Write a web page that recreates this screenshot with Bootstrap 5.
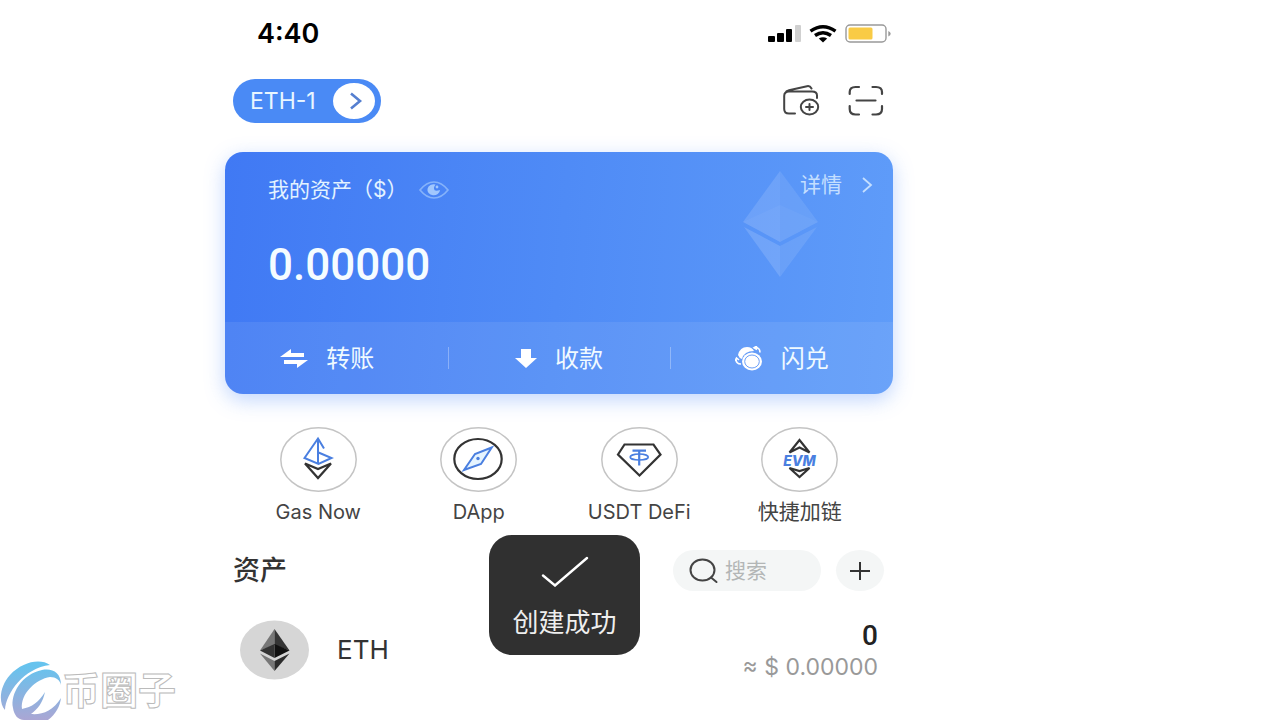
<!DOCTYPE html>
<html lang="zh-CN">
<head>
<meta charset="utf-8">
<meta name="viewport" content="width=device-width, initial-scale=1">
<title>钱包</title>
<link rel="stylesheet" href="https://cdn.jsdelivr.net/npm/bootstrap@5.3.0/dist/css/bootstrap.min.css">
<style>
  body { font-family: Inter, "Noto Sans CJK SC", sans-serif; color: #333; background: #fff; }
  svg { display: block; flex-shrink: 0; }
  .wallet { width: 100%; max-width: 668px; margin-left: 225px; }
  .status { padding: 20px 2px 0 32px; }
  .clock { font-size: 27px; line-height: 28px; font-weight: 600; color: #000; }
  .topbar { padding: 31px 8px 29px; }
  .account { height: 44px; min-width: 148px; padding: 0 6px 0 17px; font-size: 23px; line-height: 28px; color: #e9f6ff; background: #4a8af5; }
  .assets-card { border-radius: 18px; color: #e3f3ff; background: linear-gradient(95deg, #4079f4, #4f8bf6 50%, #5f9cf9); box-shadow: 0 6px 20px rgba(84, 140, 250, .36); }
  .assets-main { height: 170px; padding: 25px 19px 0 43px; }
  .caption-text { gap: 12px; font-size: 21px; line-height: 26px; }
  .total { margin-top: 34px; font: 500 44px/56px Roboto, sans-serif; color: #f5fcff; }
  .details { height: 16px; gap: 18px; color: #c4dfff; font-size: 21px; line-height: 16px; }
  .eth-mark { top: 19px; right: 75px; }
  .actions { background: rgba(255, 255, 255, .08); border-radius: 0 0 18px 18px; }
  .action { height: 72px; gap: 18px; padding-top: 8px; font-size: 24px; line-height: 32px; color: #f0faff; }
  .action:first-child { padding-right: 30px; }
  .action + .action::before { content: ""; position: absolute; left: 0; top: 25px; height: 22px; border-left: 1px solid rgba(255, 255, 255, .3); }
  .shortcuts { padding: 33px 13px 26px; }
  .shortcut { gap: 8px; color: #444; line-height: 24px; white-space: nowrap; }
  .latin { font-size: 20px; }
  .cjk { font-size: 21px; }
  .section { padding: 0 9px 27px 8px; }
  .section-title { font-size: 27px; line-height: 36px; font-weight: 500; }
  .searchbox { width: 148px; height: 41px; padding: 0 16px; gap: 7px; background: #f4f6f6; }
  .searchbox input { font-size: 21px; line-height: 28px; color: #333; outline: 0; }
  .searchbox input::placeholder { color: #b3b6b6; opacity: 1; }
  .add { width: 48px; height: 41px; margin-left: 15px; background: #f4f6f6; border-radius: 50%; }
  .token { padding: 0 15px; }
  .token-name { font-size: 26px; line-height: 32px; margin-left: 28px; }
  .amount { padding-top: 2px; font: 500 28px/32px Roboto, sans-serif; color: #222; }
  .fiat { font-size: 23px; line-height: 30px; color: #999; }
  .notice { left: 264px; top: 535px; width: 151px; padding: 21px 0 15px; gap: 19px; border-radius: 23px; background: #303030; color: #eee; font-size: 26px; line-height: 34px; }
  .brand { left: 0; bottom: 0; }
  .brand-name { font-size: 38px; line-height: 60px; font-weight: 700; color: #fff; -webkit-text-stroke: 1px #bbb; }
</style>
</head>
<body class="position-relative min-vh-100">
<main class="wallet position-relative">
  <div class="status d-flex justify-content-between align-items-center">
    <span class="clock">4:40</span>
    <div class="d-flex align-items-center">
      <svg class="me-2" width="33" height="18" viewBox="0 0 33 18" aria-hidden="true"><rect y="11" width="7" height="6" rx="1"/><rect x="9" y="8" width="7" height="9" rx="1"/><rect x="18" y="4" width="6" height="13" rx="1"/><rect x="27" width="6" height="17" rx="1" fill="#d0d0d0"/></svg>
      <svg class="me-2" width="28" height="18" viewBox="0 0 28 18" fill="none" stroke="#000" stroke-width="3.4" aria-hidden="true"><path d="M1.5 6.2Q14-2.6 26.500 6.200M6 10.500Q14 4.800 22 10.500"/><path d="M9.800 13.600Q14 11 18.200 13.600L14 17.500z" fill="#000" stroke="none"/></svg>
      <svg width="46" height="20" viewBox="0 0 46 20" aria-hidden="true"><rect x="1" y="1" width="40" height="17" rx="4" fill="#fff" stroke="#999" stroke-width="1.400"/><rect x="3.500" y="3.500" width="24" height="12" rx="1.500" fill="#f9cb45"/><path d="M43.300 7v5.500q2.400-1 2.400-2.700t-2.400-2.800" fill="#999"/></svg>
    </div>
  </div>

  <div class="topbar d-flex justify-content-between align-items-center">
    <button type="button" class="account btn border-0 rounded-pill d-flex justify-content-between align-items-center">ETH-1
      <svg width="42" height="36" viewBox="0 0 42 36" aria-hidden="true"><ellipse cx="21" cy="18" rx="21" ry="18" fill="#fff"/><path d="M18 10.500l9 7.500-9 7.500" fill="none" stroke="#557fd0" stroke-width="2.600"/></svg>
    </button>
    <div class="d-flex">
      <button type="button" class="btn border-0 p-0" aria-label="添加钱包"><svg width="37" height="32" viewBox="0 0 37 32" fill="none" stroke="#444" stroke-width="2" stroke-linecap="round"><path d="M12 28.500H6Q1.200 28.500 1.200 24V11Q1.200 6.500 6 6.500H29Q34 6.500 34 10.500V13M2 8.500Q3 6 6 5.300L24 1.200Q27 .500 28.500 3.500"/><ellipse cx="26.500" cy="22" rx="8.700" ry="7.500"/><path d="M23 22h7M26.500 19v6"/></svg></button>
      <button type="button" class="btn border-0 p-0 ms-4" aria-label="扫一扫"><svg width="41" height="32" viewBox="-3 0 38 32" fill="none" stroke="#444" stroke-width="2.200" stroke-linecap="round"><path d="M1.200 9V7Q1.200 2 7 2h3.500M24 2h3.500q6 0 6 5v2M33.500 21v3q0 5.500-6 5.500H24M10.500 29.500H7q-5.800 0-5.800-5.500v-3M8 15.500h19"/></svg></button>
    </div>
  </div>

  <section class="assets-card position-relative">
    <svg class="eth-mark position-absolute" width="75" height="106" viewBox="0 0 75 106" fill="#fff" aria-hidden="true"><path d="M37 0L0 51 37 71z" opacity=".13"/><path d="M37 0L75 51 37 71z" opacity=".09"/><path d="M37 34L0 51 37 71 75 51z" opacity=".04"/><path d="M1 56L37 75V106z" opacity=".15"/><path d="M74 56L37 75V106z" opacity=".1"/></svg>
    <div class="assets-main position-relative">
      <div class="d-flex justify-content-between align-items-start">
        <div class="d-flex align-items-center caption-text">
          <span>我的资产（$）</span>
          <button type="button" class="btn border-0 p-0" aria-label="隐藏资产"><svg width="30" height="18" viewBox="0 0 30 18"><path d="M1 9Q7.500 1 15 1t14 8q-6.500 8-14 8T1 9z" fill="none" stroke="#85b2fa" stroke-width="1.700"/><path d="M16.500 3.500A6.300 5.500 0 1 0 21 9Q15 11 15 7.500q0-2 1.500-4z" fill="#a1c7fd"/><circle cx="18" cy="6" r="1.400" fill="#a1c7fd"/></svg></button>
        </div>
        <a href="#" class="details d-flex align-items-center text-decoration-none">详情<svg width="14" height="16" viewBox="0 0 14 16" fill="none" stroke="#c4dfff" stroke-width="1.800"><path d="M3 1l8 7-8 7"/></svg></a>
      </div>
      <div class="total">0.00000</div>
    </div>
    <div class="actions row g-0">
      <button type="button" class="action btn border-0 col-4 position-relative d-flex justify-content-center align-items-center"><svg width="28" height="20" viewBox="0 0 28 20" fill="#fff"><path d="M0 8L11 0V4H24V8zM4 11H28L17 19V15H4z"/></svg>转账</button>
      <button type="button" class="action btn border-0 col-4 position-relative d-flex justify-content-center align-items-center"><svg width="22" height="20" viewBox="0 0 22 20" fill="#fff"><path d="M6 0H16V9H22L11 19 0 9H6z"/></svg>收款</button>
      <button type="button" class="action btn border-0 col-4 position-relative d-flex justify-content-center align-items-center"><svg width="28" height="26" viewBox="0 0 28 26"><path d="M3 9Q5 1 12 1q5 0 7 4-10 0-12 8-3-1-4-4z" fill="#fff"/><ellipse cx="17" cy="15.500" rx="10" ry="9" fill="#fff"/><ellipse cx="17" cy="15.500" rx="7.300" ry="6.500" fill="none" stroke="#6b9ff8"/><path d="M20 1.500q5 0 5 5M22 0l-3 1.700 3 2M1 13q0 5 5 5M0 15l1.500-3 2.500 2" fill="none" stroke="#fff" stroke-width="1.600"/></svg>闪兑</button>
    </div>
  </section>

  <nav class="shortcuts row g-0" aria-label="快捷入口">
    <a href="#" class="shortcut col d-flex flex-column align-items-center text-decoration-none">
      <svg width="77" height="65" viewBox="0 0 77 65" fill="none" stroke-width="1.800"><ellipse cx="38.500" cy="32.500" rx="37.700" ry="31.700" stroke="#c4c4c4" stroke-width="1.500"/><path d="M44 21.500L38 11.500 24.500 31 38.500 37 51.500 31 38.500 25.500M38 11.500V37" stroke="#4a7fe0" stroke-width="2"/><path d="M25 36.500L38 51 51 36.500 38 42z" stroke="#333" stroke-width="2.200"/></svg>
      <span class="latin">Gas Now</span></a>
    <a href="#" class="shortcut col d-flex flex-column align-items-center text-decoration-none">
      <svg width="77" height="65" viewBox="0 0 77 65" fill="none"><ellipse cx="38.500" cy="32.500" rx="37.700" ry="31.700" stroke="#c4c4c4" stroke-width="1.500"/><ellipse cx="38" cy="32" rx="23.700" ry="20" stroke="#333" stroke-width="2.200"/><path d="M51.700 20.500L35 27 24 43 41 37z" stroke="#4a7fe0" stroke-width="2" fill="#e5f4ff"/><circle cx="38" cy="31.500" r="1.700" fill="#4a7fe0"/></svg>
      <span class="latin">DApp</span></a>
    <a href="#" class="shortcut col d-flex flex-column align-items-center text-decoration-none">
      <svg width="77" height="65" viewBox="0 0 77 65" fill="none"><ellipse cx="38.500" cy="32.500" rx="37.700" ry="31.700" stroke="#c4c4c4" stroke-width="1.500"/><path d="M23.500 17.500H52.500L59.500 27.500 38.500 48.500 17 27.500z" stroke="#333" stroke-width="2.200"/><path d="M31.500 23.700H45M38.200 23.700V38.500" stroke="#4a7fe0" stroke-width="2.200"/><ellipse cx="38.200" cy="30" rx="9" ry="3" stroke="#4a7fe0" stroke-width="1.700"/></svg>
      <span class="latin">USDT DeFi</span></a>
    <a href="#" class="shortcut col d-flex flex-column align-items-center text-decoration-none">
      <svg width="77" height="65" viewBox="0 0 77 65" fill="none"><ellipse cx="38.500" cy="32.500" rx="37.700" ry="31.700" stroke="#c4c4c4" stroke-width="1.500"/><path d="M28.500 25.500L38.500 13 48.500 25.500 38.500 20.500zM28.500 41L38.500 50 48.500 41 38.500 44z" stroke="#333" stroke-width="2.200"/><text x="38.500" y="38.500" text-anchor="middle" font-family="Inter, sans-serif" font-size="14" font-weight="800" font-style="italic" fill="#4a7fe0">EVM</text></svg>
      <span class="cjk">快捷加链</span></a>
  </nav>

  <div class="section d-flex align-items-center">
    <h1 class="section-title mb-0 me-auto">资产</h1>
    <label class="searchbox rounded-pill d-flex align-items-center">
      <svg width="29" height="26" viewBox="0 0 29 26" fill="none" stroke="#444" stroke-width="2" stroke-linecap="round" aria-hidden="true"><ellipse cx="13.500" cy="12" rx="12" ry="10.500"/><path d="M22 19.500l5.500 4.500"/></svg>
      <input type="search" class="border-0 bg-transparent p-0 w-100" placeholder="搜索" aria-label="搜索">
    </label>
    <button type="button" class="add btn border-0 p-0 d-flex align-items-center justify-content-center" aria-label="添加资产"><svg width="22" height="20" viewBox="0 0 22 20" stroke="#333" stroke-width="2"><path d="M1 10H21M11 1V19"/></svg></button>
  </div>

  <div class="token d-flex align-items-center">
    <svg width="69" height="60" viewBox="0 0 69 60" aria-hidden="true"><ellipse cx="34.500" cy="30" rx="34.500" ry="29.500" fill="#d6d6d6"/><path d="M34.500 9L20 30.500 34.500 25z" fill="#777"/><path d="M34.500 9L49.500 30.500 34.500 25z" fill="#353535"/><path d="M20 30.500L34.500 24V38z" fill="#333"/><path d="M49.500 30.500L34.500 24V38z" fill="#111"/><path d="M20 33.500L34.500 41V51z" fill="#777"/><path d="M49.500 33.500L34.500 41V51z" fill="#2c2c2c"/></svg>
    <span class="token-name">ETH</span>
    <div class="ms-auto text-end">
      <div class="amount">0</div>
      <div class="fiat">≈ $ 0.00000</div>
    </div>
  </div>

  <div class="notice position-absolute d-flex flex-column align-items-center" role="status">
    <svg width="48" height="31" viewBox="0 0 48 31" fill="none" stroke="#fff" stroke-width="2.400" stroke-linecap="round"><path d="M2 19.500L14 29.500 46 2"/></svg>
    创建成功
  </div>
</main>

<div class="brand position-absolute d-flex align-items-center">
  <svg width="62" height="60" viewBox="0 0 62 60" aria-hidden="true"><defs><linearGradient id="swoosh" x1="0" y1="0" x2="0" y2="60" gradientUnits="userSpaceOnUse"><stop offset=".1" stop-color="#66c3ee"/><stop offset="1" stop-color="#aaa6d4"/></linearGradient></defs><g fill="url(#swoosh)"><path d="M50 5C40-2 22 2 10 15 0 26-2 42 5 50 6 33 24 8 50 5z"/><path d="M61 25C61 12 52 8 42 10 22 14 10 34 13 48 14 55 18 60 24 60H48C56 54 60 46 61 38 53 51 42 55 31 54 38 49 43 42 45 32 39 42 32 47 22 49 20 34 36 19 50 17 56 17 60 20 61 25z"/></g></svg>
  <span class="brand-name">币圈子</span>
</div>
<script src="https://cdn.jsdelivr.net/npm/bootstrap@5.3.0/dist/js/bootstrap.bundle.min.js"></script>
</body>
</html>
